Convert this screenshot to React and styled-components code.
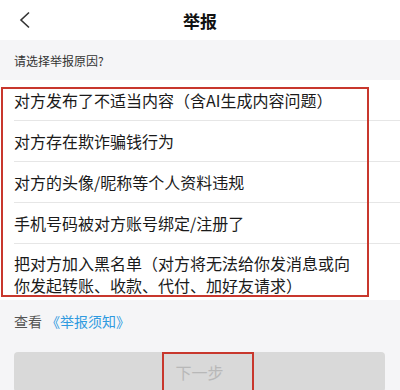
import React from "react";
import styled, { createGlobalStyle } from "styled-components";

const GlobalStyle = createGlobalStyle`
  html, body {
    margin: 0;
    padding: 0;
    background: #f5f5f7;
  }
  * {
    box-sizing: border-box;
  }
`;

const Page = styled.div`
  width: 400px;
  height: 390px;
  overflow: hidden;
  background: #f5f5f7;
  font-family: "Noto Sans CJK SC", "Noto Sans", sans-serif;
  color: #1a1a1a;
`;

const Header = styled.header`
  height: 40px;
  background: #fff;
  display: grid;
  grid-template-columns: 60px 1fr 60px;
  align-items: center;
`;

const BackButton = styled.button`
  border: none;
  background: none;
  padding: 0 0 0 18px;
  height: 40px;
  display: flex;
  align-items: center;
  cursor: pointer;
`;

const Title = styled.h1`
  margin: 0;
  text-align: center;
  font-size: 17px;
  font-weight: 700;
  color: #111;
`;

const Prompt = styled.div`
  height: 40px;
  display: flex;
  align-items: center;
  padding: 0 14px;
  font-size: 12px;
  color: #333;
`;

const ListWrap = styled.div`
  position: relative;
  background: #fff;
`;

const List = styled.ul`
  margin: 0;
  padding: 0;
  list-style: none;
`;

// the divider starts under the text, so the row is indented and not padded
const Item = styled.li`
  margin-left: 14px;
  padding: ${(props) => (props.multi ? "8px 44px 4px 0" : "9px 14px 9px 0")};
  font-size: 16px;
  line-height: 22px;
  color: #1a1a1a;
  border-bottom: ${(props) => (props.last ? "none" : "1px solid #e6e6e6")};
`;

// red marking boxes drawn over the screenshot
const Highlight = styled.div`
  position: absolute;
  top: ${(props) => props.top}px;
  left: ${(props) => props.left}px;
  width: ${(props) => props.width}px;
  height: ${(props) => props.height}px;
  border: 2px solid #c8372d;
  pointer-events: none;
`;

const Notice = styled.div`
  padding: 0 14px;
  height: 42px;
  display: flex;
  align-items: center;
  font-size: 14px;
  color: #555;
`;

const NoticeLink = styled.a`
  margin-left: 4px;
  color: #2f9ae0;
  text-decoration: none;
`;

const Footer = styled.div`
  padding: 10px 14px 0 14px;
`;

const NextButton = styled.button`
  position: relative;
  width: 371px;
  height: 40px;
  border: none;
  border-radius: 4px;
  background: #d9d9d9;
  color: #b8b8b8;
  font-family: inherit;
  font-size: 16px;
  display: flex;
  align-items: center;
  justify-content: center;
`;

const reasons = [
  "对方发布了不适当内容（含AI生成内容问题）",
  "对方存在欺诈骗钱行为",
  "对方的头像/昵称等个人资料违规",
  "手机号码被对方账号绑定/注册了",
];

const App = () => {
  return (
    <Page>
      <GlobalStyle />
      <Header>
        <BackButton aria-label="返回">
          <svg width="14" height="18" viewBox="0 0 14 18">
            <polyline
              points="11,1.5 3,9 11,16.5"
              fill="none"
              stroke="#333"
              strokeWidth="1.6"
            />
          </svg>
        </BackButton>
        <Title>举报</Title>
        <div />
      </Header>
      <Prompt>请选择举报原因?</Prompt>
      <ListWrap>
        <List>
          {reasons.map((r) => (
            <Item key={r}>{r}</Item>
          ))}
          <Item multi last>
            把对方加入黑名单（对方将无法给你发消息或向你发起转账、收款、代付、加好友请求）
          </Item>
        </List>
        <Highlight top={7} left={1} width={368} height={210} />
      </ListWrap>
      <Notice>
        查看<NoticeLink href="#">《举报须知》</NoticeLink>
      </Notice>
      <Footer>
        <NextButton>
          下一步
          <Highlight top={0} left={148} width={92} height={50} />
        </NextButton>
      </Footer>
    </Page>
  );
};

export default App;
